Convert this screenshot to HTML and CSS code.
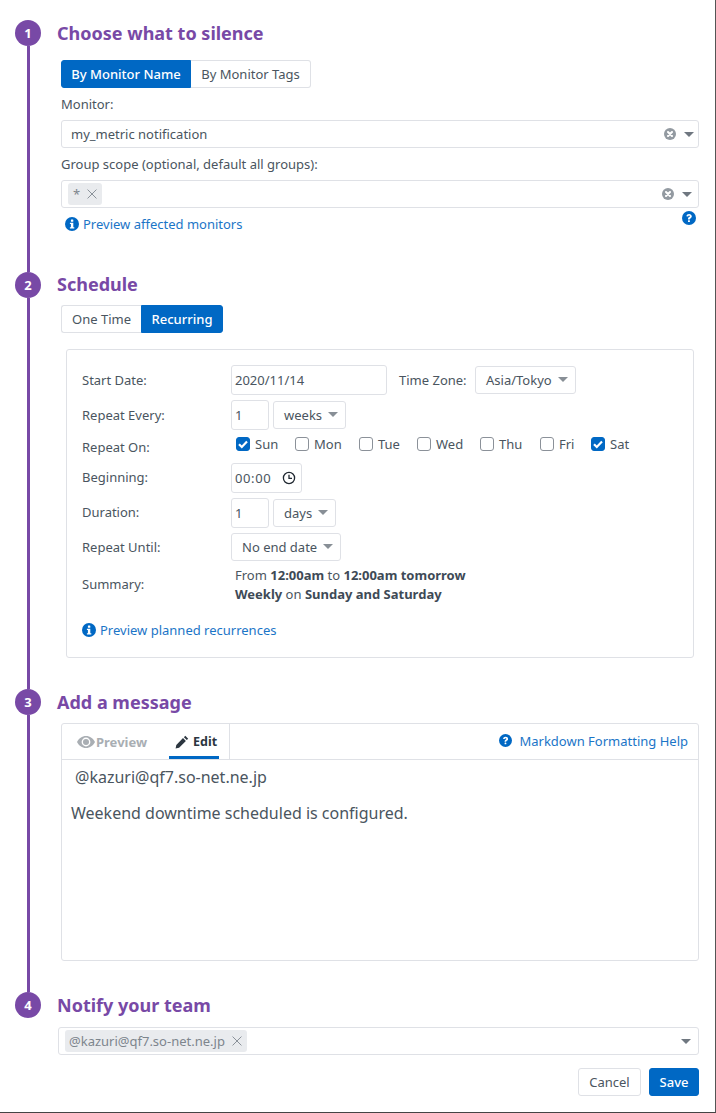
FILE: index.html
```html
<!DOCTYPE html>
<html lang="en">
<head>
<meta charset="utf-8">
<title>Manage Downtime</title>
<link rel="stylesheet" href="styles.css">
</head>
<body>
<svg class="defs" aria-hidden="true">
  <defs>
    <symbol id="i-info" viewBox="0 0 14 14"><circle cx="7" cy="7" r="7" fill="currentColor"/><rect x="5.9" y="2.4" width="2.4" height="2.3" rx=".5" fill="#fff"/><path d="M4.9 5.8h3.4v4.5h1v1.3H4.9v-1.3h1V7.1h-1z" fill="#fff"/></symbol>
    <symbol id="i-help" viewBox="0 0 14 14"><circle cx="7" cy="7" r="7" fill="currentColor"/><path d="M4.4 5.300C4.600 3.900 5.700 3 7.100 3c1.500 0 2.700 1 2.700 2.300 0 1.100-.7 1.600-1.400 2.100-.4.3-.6.5-.6 1H6V8c0-1 .5-1.500 1.100-1.900.5-.3.8-.5.8-.8 0-.4-.4-.7-.8-.7-.5 0-.8.3-1 .9z" fill="#fff"/><rect x="6" y="9.2" width="1.9" height="1.9" rx=".4" fill="#fff"/></symbol>
    <symbol id="i-clear" viewBox="0 0 12 12"><circle cx="6" cy="6" r="6" fill="#939aa1"/><path d="M4 4l4 4M8 4l-4 4" stroke="#fff" stroke-width="2.100" stroke-linecap="round"/></symbol>
    <symbol id="i-x" viewBox="0 0 9 9"><path d="M.5.5l8 8M8.500.5l-8 8" stroke="currentColor" stroke-width=".9" fill="none"/></symbol>
    <symbol id="i-check" viewBox="0 0 14 14"><path d="M3 7.200l2.800 2.800L11 4.600" stroke="#fff" stroke-width="2.200" fill="none"/></symbol>
  </defs>
</svg>
<main class="page">

  <section class="step step-1">
    <div class="rail"><span class="num">1</span><span class="line"></span></div>
    <div class="body">
      <h2 class="title">Choose what to silence</h2>
      <div class="group">
        <span class="seg seg-on seg-name">By Monitor Name</span><span class="seg seg-tags">By Monitor Tags</span>
      </div>
      <div class="lbl">Monitor:</div>
      <div class="combo">
        <span class="combo-val">my_metric notification</span>
        <svg class="clear"><use href="#i-clear"/></svg><span class="caret"></span>
      </div>
      <div class="lbl">Group scope (optional, default all groups):</div>
      <div class="combo combo-tag">
        <span class="tag tag-star">*<svg class="x"><use href="#i-x"/></svg></span>
        <svg class="clear"><use href="#i-clear"/></svg><span class="caret"></span>
      </div>
      <div class="under">
        <a class="link"><svg class="ico"><use href="#i-info"/></svg>Preview affected monitors</a>
        <svg class="ico help"><use href="#i-help"/></svg>
      </div>
    </div>
  </section>

  <section class="step step-2">
    <div class="rail"><span class="num">2</span><span class="line"></span></div>
    <div class="body">
      <h2 class="title">Schedule</h2>
      <div class="group">
        <span class="seg seg-one">One Time</span><span class="seg seg-on seg-rec">Recurring</span>
      </div>
      <div class="panel">
        <div class="row r-30"><span class="rl">Start Date:</span>
          <span class="inp inp-date">2020/11/14</span>
          <span class="tz">Time Zone:</span>
          <span class="sel sel-tz">Asia/Tokyo<i class="caret-s"></i></span>
        </div>
        <div class="row r-30"><span class="rl">Repeat Every:</span>
          <span class="inp inp-num">1</span>
          <span class="sel sel-w">weeks<i class="caret-s"></i></span>
        </div>
        <div class="row r-days"><span class="rl">Repeat On:</span>
          <div class="days">
            <label class="day d-sun"><span class="cb on"><svg><use href="#i-check"/></svg></span>Sun</label>
            <label class="day d-mon"><span class="cb"></span>Mon</label>
            <label class="day d-tue"><span class="cb"></span>Tue</label>
            <label class="day d-wed"><span class="cb"></span>Wed</label>
            <label class="day d-thu"><span class="cb"></span>Thu</label>
            <label class="day d-fri"><span class="cb"></span>Fri</label>
            <label class="day d-sat"><span class="cb on"><svg><use href="#i-check"/></svg></span>Sat</label>
          </div>
        </div>
        <div class="row r-30"><span class="rl rl-up">Beginning:</span>
          <span class="inp inp-time"><span class="time">00:00</span>
            <svg class="clock" viewBox="0 0 14 14"><circle cx="7" cy="7" r="5.6" fill="none" stroke="#1f2730" stroke-width="1.3"/><path d="M7 3.800V7.400H10" fill="none" stroke="#1f2730" stroke-width="1.3"/></svg>
          </span>
        </div>
        <div class="row r-30"><span class="rl rl-up">Duration:</span>
          <span class="inp inp-num">1</span>
          <span class="sel sel-d">days<i class="caret-s"></i></span>
        </div>
        <div class="row r-28"><span class="rl">Repeat Until:</span>
          <span class="sel sel-end">No end date<i class="caret-s"></i></span>
        </div>
        <div class="row r-sum"><span class="rl rl-up">Summary:</span>
          <div class="sum">
            <div>From <b>12:00am</b> to <b>12:00am tomorrow</b></div>
            <div><b>Weekly</b> on <b>Sunday and Saturday</b></div>
          </div>
        </div>
        <a class="link link-plan"><svg class="ico"><use href="#i-info"/></svg>Preview planned recurrences</a>
      </div>
    </div>
  </section>

  <section class="step step-3">
    <div class="rail"><span class="num">3</span><span class="line"></span></div>
    <div class="body">
      <h2 class="title">Add a message</h2>
      <div class="editor">
        <div class="tabs">
          <div class="tabset">
            <span class="tab tab-prev">
              <svg class="eye" viewBox="0 0 18 12"><path fill-rule="evenodd" d="M9 0c4 0 7.200 2.500 9 6-1.800 3.500-5 6-9 6S1.800 9.500 0 6c1.800-3.500 5-6 9-6zm0 1.600A4.400 4.400 0 1 0 9 10.400 4.400 4.400 0 0 0 9 1.600z" fill="#a9aeb3"/><circle cx="9" cy="6" r="3" fill="#a9aeb3"/></svg>Preview
            </span>
            <span class="tab tab-edit">
              <svg class="pen" viewBox="0 0 14 14"><path d="M10.300.8l2.900 2.900-1.400 1.400-2.900-2.900zM8 3.100L10.900 6l-6.800 6.800-3.500.7.700-3.600z" fill="#2c3640"/></svg>Edit
            </span>
          </div>
          <a class="link link-md"><svg class="ico"><use href="#i-help"/></svg>Markdown Formatting Help</a>
        </div>
        <div class="msg">
          <p class="msg-to">@kazuri@qf7.so-net.ne.jp</p>
          <p class="msg-txt">Weekend downtime scheduled is configured.</p>
        </div>
      </div>
    </div>
  </section>

  <section class="step step-4">
    <div class="rail"><span class="num">4</span></div>
    <div class="body">
      <h2 class="title">Notify your team</h2>
      <div class="combo combo-notify">
        <span class="tag tag-mail">@kazuri@qf7.so-net.ne.jp<svg class="x"><use href="#i-x"/></svg></span>
        <span class="caret"></span>
      </div>
      <div class="actions">
        <span class="btn">Cancel</span>
        <span class="btn btn-save">Save</span>
      </div>
    </div>
  </section>

</main>
</body>
</html>
```

FILE: styles.css
```css
* { box-sizing: border-box; }
html, body { margin: 0; padding: 0; background: #fff; }
body {
  width: 716px;
  height: 1113px;
  overflow: hidden;
  font-family: "Noto Sans", "Open Sans", sans-serif;
  font-size: 13px;
  line-height: 18px;
  color: #4a5560;
}
.defs { display: none; }
.page {
  height: 1113px;
  padding: 20px 16px 0 15px;
  border-bottom: 1px solid #444;
  border-right: 1px solid #555;
}

.step { display: flex; }
.step-1 { height: 252px; }
.step-2 { height: 417px; }
.step-3 { height: 303px; }

.rail { width: 26px; flex: none; display: flex; flex-direction: column; align-items: center; }
.num {
  width: 26px; height: 26px; flex: none;
  border-radius: 50%;
  background: #7849a6;
  color: #fff;
  font-weight: 700;
  font-size: 13px;
  line-height: 26px;
  text-align: center;
}
.line { flex: 1; width: 3px; background: #7849a6; }

.body { flex: 1; min-width: 0; padding-left: 16px; }
.title {
  margin: 0;
  height: 26px;
  font-size: 18px;
  line-height: 26px;
  font-weight: 700;
  color: #7849a6;
}
.step-2 .title { margin-top: -1px; }

.group { display: flex; margin: 14px 0 0 4px; height: 28px; width: max-content; }
.step-2 .group { margin-top: 8px; }
.seg {
  height: 28px;
  line-height: 26px;
  text-align: center;
  border: 1px solid #dfe1e6;
  background: #fff;
  color: #4a5560;
}
.seg-on { background: #0068c4; border-color: #0068c4; color: #fff; font-weight: 500; }
.seg-name { width: 130px; border-radius: 3px 0 0 3px; }
.seg-tags { width: 120px; border-left: 0; border-radius: 0 3px 3px 0; }
.seg-one { width: 80px; border-right: 0; border-radius: 3px 0 0 3px; }
.seg-rec { width: 82px; border-radius: 0 3px 3px 0; }

.lbl { margin: 7px 0 0 4px; height: 18px; }
.combo {
  display: flex; align-items: center;
  height: 28px;
  margin: 7px 0 0 4px;
  padding-left: 9px;
  border: 1px solid #dfe1e6;
  border-radius: 3px;
  color: #4a5560;
}
.combo-val { flex: 1; }
.combo-tag { padding-left: 6px; }
.combo-tag .tag { margin-right: auto; }
.clear { width: 12px; height: 12px; flex: none; margin-right: 8px; }
.caret {
  flex: none;
  margin-right: 4px;
  width: 0; height: 0;
  border-left: 5.5px solid transparent;
  border-right: 5.5px solid transparent;
  border-top: 5px solid #6f7780;
}
.combo-tag .caret { margin-right: 6px; }

.tag {
  display: inline-flex; align-items: center;
  height: 22px;
  border-radius: 3px;
  background: #e9ebee;
  color: #7d858d;
}
.tag-star { width: 34px; padding-left: 5px; }
.tag-mail { width: 182px; padding-left: 4px; margin-right: auto; }
.x { width: 10px; height: 10px; color: #8a9199; flex: none; }
.tag-star .x { margin-left: 7px; }
.tag-mail .x { margin-left: 7px; }

.under { display: flex; justify-content: space-between; margin: 0 0 0 4px; height: 32px; }
.link { display: flex; align-items: center; color: #1b75c7; }
.ico { width: 14px; height: 14px; flex: none; color: #0068c4; }
.under .link { height: 32px; margin-left: 4px; }
.under .link .ico { margin-right: 4px; margin-top: -1px; }
.help { margin: 3px 3px 0 0; }

.panel {
  margin: 16px 5px 0 9px;
  height: 309px;
  padding: 15px 15px 0;
  border: 1px solid #dfe1e6;
  border-radius: 3px;
  display: flex; flex-direction: column;
}
.row { display: flex; align-items: center; margin-bottom: 5px; }
.r-30 { height: 30px; }
.r-28 { height: 28px; }
.r-days { height: 23px; margin-bottom: 5px; }
.r-sum { height: 37px; margin-bottom: 0; }
.rl { width: 149px; flex: none; }
.rl-up { padding-bottom: 2px; }

.inp {
  display: flex; align-items: center;
  height: 30px;
  padding-left: 3px;
  border: 1px solid #dfe1e6;
  border-radius: 3px;
}
.inp-date { width: 156px; }
.inp-num { width: 38px; }
.inp-time { width: 71px; }
.time { letter-spacing: .6px; }
.clock { width: 14px; height: 14px; margin-left: 11px; margin-top: -1px; }

.sel {
  position: relative;
  display: block;
  height: 28px;
  line-height: 26px;
  padding-left: 10px;
  border: 1px solid #dfe1e6;
  border-radius: 3px;
}
.caret-s {
  position: absolute;
  right: 7px; top: 10px;
  border-left: 5px solid transparent;
  border-right: 5px solid transparent;
  border-top: 5px solid #888f96;
}
.tz { margin-left: 12px; width: 76px; }
.sel-tz { width: 101px; }
.sel-w { width: 73px; margin-left: 4px; }
.sel-d { width: 63px; margin-left: 4px; }
.sel-end { width: 110px; }

.days { display: flex; align-items: center; padding-bottom: 5px; padding-left: 5px; }
.day { display: flex; align-items: center; height: 18px; }
.cb {
  display: block;
  width: 14px; height: 14px;
  margin-right: 5px;
  border: 1px solid #8b9199;
  border-radius: 3px;
  background: #fff;
}
.cb.on { background: #0068c4; border-color: #0068c4; position: relative; }
.cb svg { position: absolute; left: -1px; top: -1px; width: 14px; height: 14px; }
.d-sun { width: 59px; }
.d-mon { width: 64px; }
.d-tue { width: 58px; }
.d-wed { width: 63px; }
.d-thu { width: 60px; }
.d-fri { width: 51px; }

.sum { line-height: 19px; color: #4a5560; padding-left: 4px; margin-top: 1px; }
.sum b { font-weight: 700; color: #3e4a56; }

.link-plan { margin-top: 18px; height: 18px; }
.link-plan .ico { margin-right: 4px; margin-top: -1px; }

.editor {
  margin: 8px 0 0 4px;
  height: 238px;
  border: 1px solid #dfe1e6;
  border-radius: 3px;
}
.tabs {
  display: flex; justify-content: space-between;
  height: 36px;
  border-bottom: 1px solid #dfe1e6;
}
.tabset { display: flex; width: 168px; border-right: 1px solid #dfe1e6; padding-left: 15px; }
.tab { display: flex; align-items: center; height: 35px; font-weight: 700; font-size: 12.5px; }
.tab-prev { width: 92px; color: #a9aeb3; font-size: 13px; }
.tab-edit {
  width: 50px;
  padding-left: 6px;
  color: #2c3640;
  border-bottom: 3px solid #0068c4;
  padding-top: 3px;
}
.eye { width: 18px; height: 12px; margin-right: 1px; }
.pen { width: 14px; height: 14px; margin-right: 4px; }
.link-md { height: 33px; margin-right: 10px; }
.link-md .ico { width: 13px; height: 13px; margin-right: 7px; }

.msg { font-size: 16px; line-height: 22px; color: #4a5560; }
.msg p { margin: 0; }
.msg-to { padding: 6px 0 0 13px; }
.msg-txt { padding: 14px 0 0 9px; }

.combo-notify { margin: 9px 0 0 1px; padding-left: 6px; }
.combo-notify .caret { border-left-width: 5px; border-right-width: 5px; margin-right: 7px; }

.actions { display: flex; justify-content: flex-end; gap: 8px; margin-top: 13px; }
.btn {
  height: 28px; width: 63px;
  line-height: 26px;
  text-align: center;
  border: 1px solid #dfe1e6;
  border-radius: 3px;
  color: #4a5560;
}
.btn-save { width: 50px; background: #0068c4; border-color: #0068c4; color: #fff; font-weight: 500; }
```
